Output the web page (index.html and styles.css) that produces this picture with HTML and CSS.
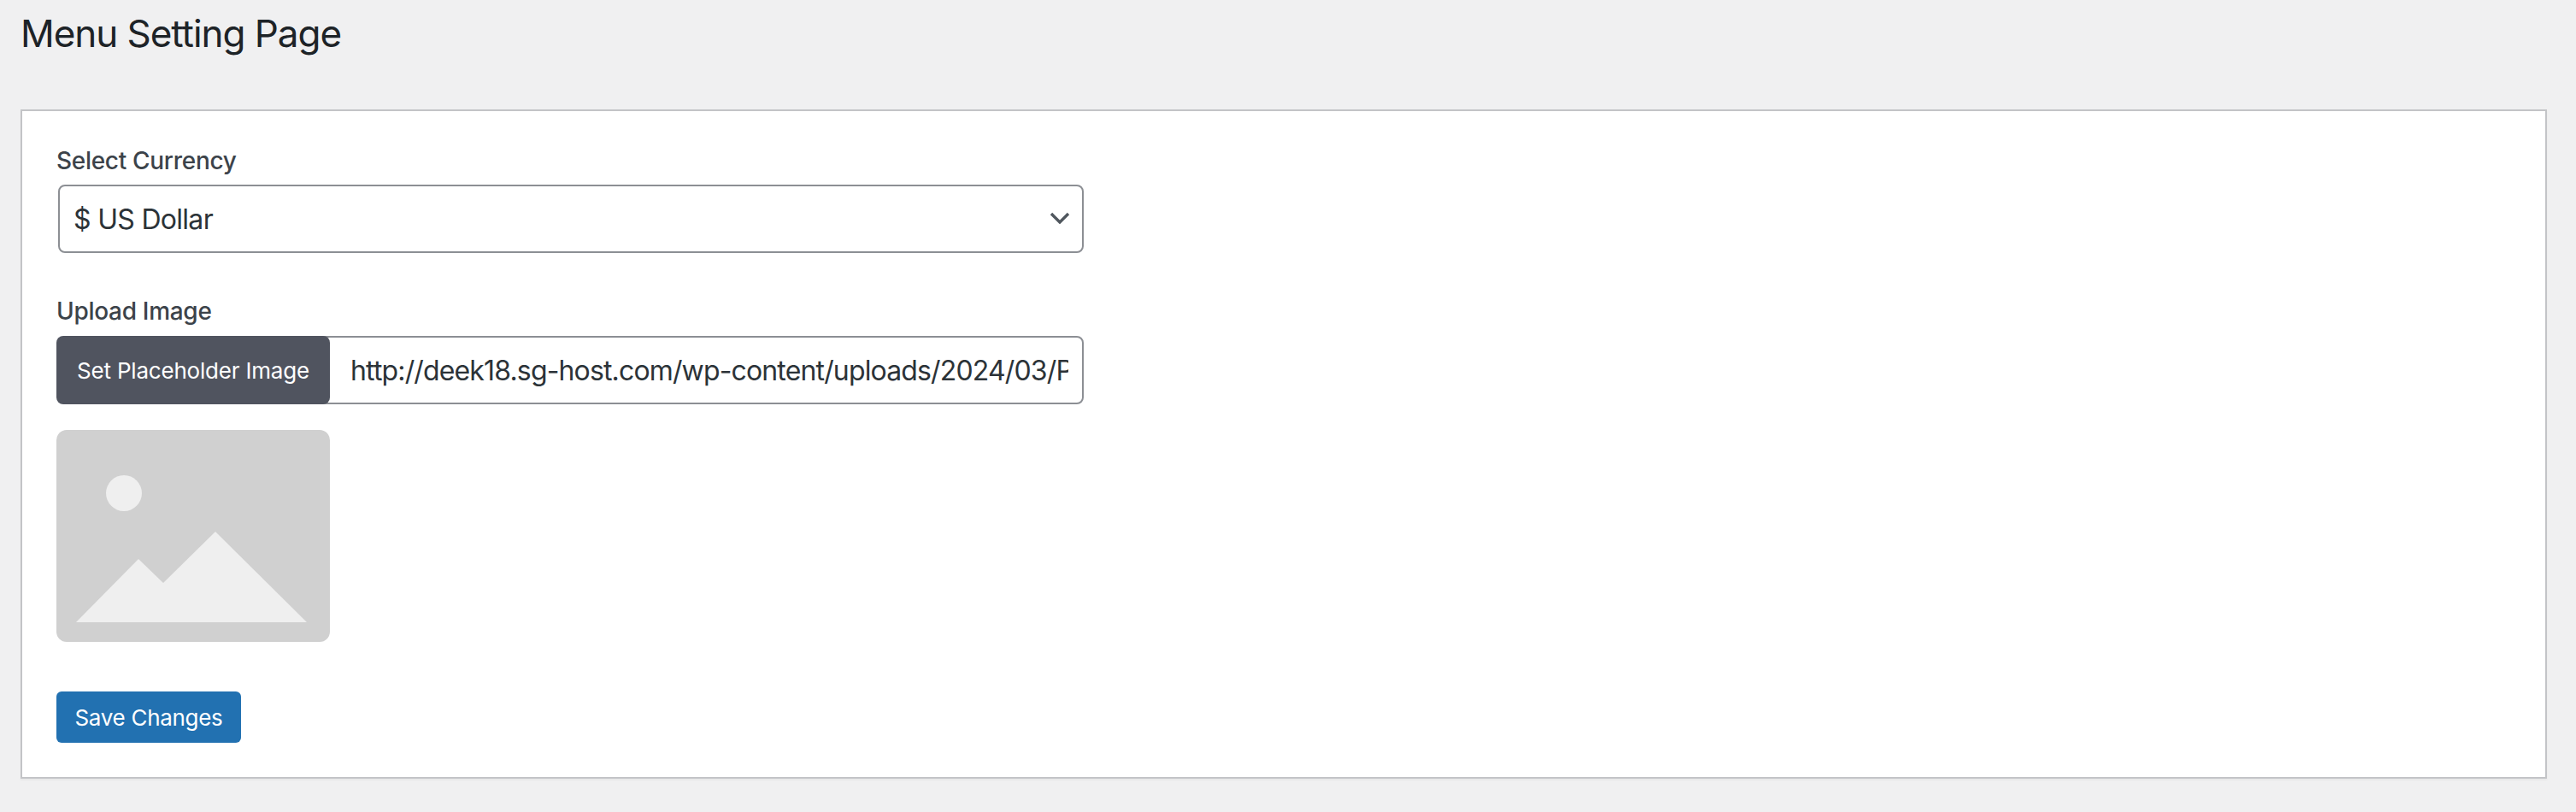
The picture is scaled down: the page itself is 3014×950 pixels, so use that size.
FILE: index.html

```html
<!DOCTYPE html>
<html lang="en">
<head>
    <meta charset="UTF-8">
    <title>Menu Setting Page</title>
    <link rel="stylesheet" href="styles.css">
</head>
<body>
<div class="wrap">
    <h1 class="page-title">Menu Setting Page</h1>
    <form class="card">
        <label class="field-label" for="currency">Select Currency</label>
        <div class="select-box">
            <select id="currency" class="currency-select">
                <option>$ US Dollar</option>
            </select>
            <svg class="select-arrow" width="24" height="14" viewBox="0 0 24 14">
                <path d="M2 2l10 10L22 2" fill="none" stroke="#50575e" stroke-width="3.4"/>
            </svg>
        </div>
        <label class="field-label upload-label" for="placeholder">Upload Image</label>
        <div class="upload-row">
            <button type="button" class="btn-upload">Set Placeholder Image</button>
            <input id="placeholder" class="upload-input" type="text" value="http://deek18.sg-host.com/wp-content/uploads/2024/03/Placeholder.png">
        </div>
        <div class="preview">
            <svg width="320" height="248" viewBox="0 0 320 248">
                <circle cx="79" cy="74" r="21" fill="#efefef"/>
                <path d="M23 225L96 151L125 179L186 119L293 225Z" fill="#efefef"/>
            </svg>
        </div>
        <button type="button" class="btn-save">Save Changes</button>
    </form>
</div>
</body>
</html>
```

FILE: styles.css

```css
*{
    box-sizing: border-box;
}
body{
    margin: 0;
    background-color: #f0f0f1;
    font-family: "Inter", "Liberation Sans", sans-serif;
    color: #2c3338;
}
.wrap{
    padding: 0 34px 39px 24px;
}
.page-title{
    margin: 0;
    padding: 10px 0 0 0;
    height: 128px;
    font-size: 44px;
    line-height: 58px;
    font-weight: 400;
    letter-spacing: -1.05px;
    color: #1d2327;
}
.card{
    display: flex;
    flex-direction: column;
    align-items: flex-start;
    height: 783px;
    padding: 38px 40px;
    background-color: #fff;
    border: 2px solid #c3c4c7;
    box-shadow: 0 2px 2px rgba(0,0,0,.04);
}
.field-label{
    font-size: 28px;
    line-height: 40px;
    font-weight: 500;
    letter-spacing: -0.3px;
    color: #3c434a;
}
.upload-label{
    margin-top: 48px;
}
.select-box{
    position: relative;
    width: 1200px;
    height: 80px;
    margin: 8px 0 0 2px;
}
.currency-select{
    display: block;
    width: 100%;
    height: 100%;
    padding: 0 48px 0 16px;
    appearance: none;
    background-color: #fff;
    border: 2px solid #8c8f94;
    border-radius: 8px;
    font: 32px "Inter", "Liberation Sans", sans-serif;
    letter-spacing: -0.7px;
    color: #2c3338;
}
.select-arrow{
    position: absolute;
    top: 32px;
    right: 16px;
}
.upload-row{
    display: flex;
    width: 1202px;
    height: 80px;
    margin-top: 9px;
}
.btn-upload{
    position: relative;
    z-index: 1;
    flex: 0 0 320px;
    padding: 0;
    background-color: #50545f;
    border: 0;
    border-radius: 8px;
    font: 26px "Inter", "Liberation Sans", sans-serif;
    letter-spacing: -0.2px;
    color: #fff;
}
.upload-input{
    flex: 1;
    min-width: 0;
    margin-left: -8px;
    padding: 0 16px 0 30px;
    background-color: #fff;
    border: 2px solid #8c8f94;
    border-radius: 0 8px 8px 0;
    font: 32px "Inter", "Liberation Sans", sans-serif;
    letter-spacing: -0.85px;
    color: #2c3338;
}
.preview{
    width: 320px;
    height: 248px;
    margin-top: 30px;
    background-color: #d0d0d0;
    border-radius: 12px;
}
.preview svg{
    display: block;
}
.btn-save{
    width: 216px;
    height: 60px;
    margin-top: 58px;
    padding: 0;
    background-color: #2271b1;
    border: 0;
    border-radius: 6px;
    font: 26px "Inter", "Liberation Sans", sans-serif;
    letter-spacing: -0.3px;
    color: #fff;
}
```
